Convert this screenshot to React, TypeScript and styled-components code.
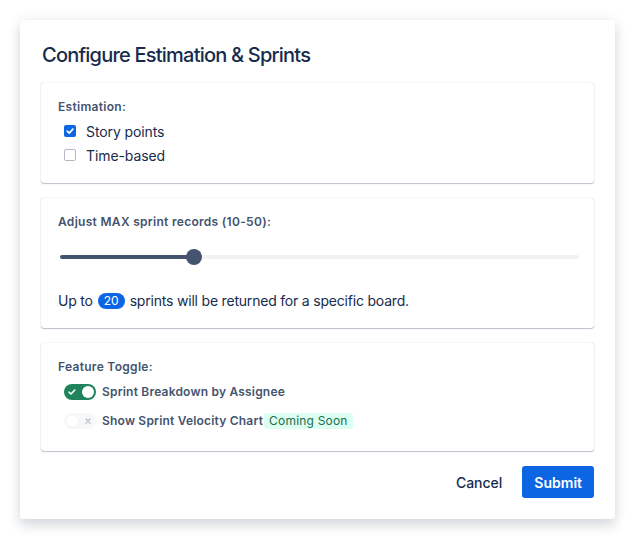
import React from "react";
import styled, { createGlobalStyle } from "styled-components";

const Global = createGlobalStyle`
  html, body { margin: 0; padding: 0; background: #ffffff; }
  body { font-family: Inter, "Noto Sans", Roboto, sans-serif; color: #172B4D; }
  * { box-sizing: border-box; }
`;

const Page = styled.div`
  padding: 20px;
`;

const Modal = styled.div`
  width: 595px;
  background: #fff;
  border-radius: 3px;
  box-shadow: 0 8px 12px rgba(9, 30, 66, 0.12), 0 0 14px rgba(9, 30, 66, 0.08);
  padding: 23px 21px 21px 21px;
  display: flex;
  flex-direction: column;
`;

const Title = styled.h1`
  margin: 0 0 16px 1px;
  font-size: 20px;
  line-height: 24px;
  font-weight: 500;
  color: #172B4D;
  letter-spacing: -0.78px;
`;

const Cards = styled.div`
  display: flex;
  flex-direction: column;
  gap: 15px;
`;

const Card = styled.section<{ $pb?: number }>`
  background: #fff;
  border-radius: 3px;
  box-shadow: 0 1px 1px rgba(9, 30, 66, 0.25), 0 0 1px rgba(9, 30, 66, 0.31);
  padding: 16px 16px ${(p) => p.$pb ?? 16}px 17px;
  display: flex;
  flex-direction: column;
`;

const Label = styled.div`
  font-size: 12px;
  line-height: 16px;
  font-weight: 600;
  color: #44546F;
  letter-spacing: 0.3px;
`;

const CheckRow = styled.label`
  display: flex;
  align-items: center;
  height: 24px;
  padding-left: 6px;
  gap: 10px;
  font-size: 14px;
  color: #172B4D;
  letter-spacing: -0.1px;
`;

const Box = styled.span<{ $checked?: boolean }>`
  width: 12px;
  height: 12px;
  border-radius: 2px;
  display: inline-flex;
  align-items: center;
  justify-content: center;
  background: ${(p) => (p.$checked ? "#0C66E4" : "#fff")};
  border: ${(p) => (p.$checked ? "none" : "1.5px solid #B3B9C4")};
`;

const Checks = styled.div`
  display: flex;
  flex-direction: column;
  margin-top: 4px;
`;

const SliderWrap = styled.div`
  position: relative;
  height: 16px;
  margin: 19px -1px 0 2px;
`;

const Track = styled.div`
  position: absolute;
  left: 0;
  right: 0;
  top: 6px;
  height: 4px;
  border-radius: 2px;
  background: #F1F2F4;
`;

const Fill = styled.div`
  position: absolute;
  left: 0;
  top: 6px;
  height: 4px;
  border-radius: 2px;
  background: #44546F;
`;

const Thumb = styled.div`
  position: absolute;
  top: 0;
  width: 16px;
  height: 16px;
  margin-left: -8px;
  border-radius: 50%;
  background: #44546F;
`;

const Info = styled.p`
  margin: 26px 0 0 0;
  font-size: 14px;
  line-height: 20px;
  color: #172B4D;
  display: flex;
  align-items: center;
  gap: 4px;
  letter-spacing: -0.2px;
`;

const Badge = styled.span`
  display: inline-flex;
  align-items: center;
  justify-content: center;
  background: #0C66E4;
  color: #fff;
  border-radius: 8px;
  height: 16px;
  padding: 0 6px;
  font-size: 12px;
  line-height: 16px;
  margin: 0 1px;
  letter-spacing: 0;
`;

const Toggles = styled.div`
  display: flex;
  flex-direction: column;
  gap: 13px;
  margin-top: 9px;
`;

const ToggleRow = styled.div`
  display: flex;
  align-items: center;
  gap: 6px;
  padding-left: 6px;
  font-size: 12px;
  font-weight: 600;
  color: #44546F;
  line-height: 16px;
  letter-spacing: 0.2px;
`;

const Switch = styled.span<{ $on?: boolean }>`
  position: relative;
  width: 32px;
  height: 16px;
  border-radius: 8px;
  background: ${(p) => (p.$on ? "#1F845A" : "#F7F8F9")};
  display: inline-flex;
  align-items: center;
  justify-content: space-between;
  padding: 0 3px;
  flex-shrink: 0;
`;

const Knob = styled.span<{ $on?: boolean }>`
  position: absolute;
  top: 2px;
  left: ${(p) => (p.$on ? "18px" : "2px")};
  width: 12px;
  height: 12px;
  border-radius: 50%;
  background: #fff;
  box-shadow: ${(p) => (p.$on ? "none" : "0 0 0 0.5px rgba(9,30,66,0.05)")};
`;

const Lozenge = styled.span`
  display: inline-flex;
  align-items: center;
  height: 16px;
  padding: 0 5px;
  border-radius: 3px;
  background: #DCFFF1;
  color: #216E4E;
  font-weight: 400;
  font-size: 12px;
  margin-left: -5px;
  letter-spacing: 0.2px;
`;

const Footer = styled.div`
  display: flex;
  justify-content: flex-end;
  align-items: center;
  gap: 8px;
  margin-top: 15px;
`;

const Button = styled.button<{ $primary?: boolean }>`
  font-family: inherit;
  font-size: 14px;
  font-weight: ${(p) => (p.$primary ? 600 : 500)};
  height: 32px;
  padding: 0 12px;
  border: none;
  border-radius: 3px;
  background: ${(p) => (p.$primary ? "#0C66E4" : "transparent")};
  color: ${(p) => (p.$primary ? "#fff" : "#172B4D")};
  cursor: pointer;
`;

const Check = () => (
  <svg width="10" height="10" viewBox="0 0 10 10">
    <path d="M2.2 5.2 L4.2 7.1 L7.9 3.1" stroke="#fff" strokeWidth="1.7" fill="none" strokeLinecap="round" strokeLinejoin="round" />
  </svg>
);

export default function App() {
  const min = 10, max = 50, value = 20;
  const pct = ((value - min) / (max - min)) * 100;
  return (
    <>
      <Global />
      <Page>
        <Modal>
          <Title>Configure Estimation &amp; Sprints</Title>
          <Cards>
            <Card>
              <Label>Estimation:</Label>
              <Checks>
                <CheckRow>
                  <Box $checked><Check /></Box>
                  Story points
                </CheckRow>
                <CheckRow>
                  <Box />
                  Time-based
                </CheckRow>
              </Checks>
            </Card>
            <Card $pb={17}>
              <Label>Adjust MAX sprint records (10-50):</Label>
              <SliderWrap>
                <Track />
                <Fill style={{ width: `${pct + 0.8}%` }} />
                <Thumb style={{ left: `${pct + 0.8}%` }} />
              </SliderWrap>
              <Info>
                Up to <Badge>20</Badge> sprints will be returned for a specific board.
              </Info>
            </Card>
            <Card $pb={22}>
              <Label>Feature Toggle:</Label>
              <Toggles>
                <ToggleRow>
                  <Switch $on>
                    <svg width="10" height="10" viewBox="0 0 10 10">
                      <path d="M2 5.2 L4 7 L7.8 3" stroke="#fff" strokeWidth="1.6" fill="none" strokeLinecap="round" strokeLinejoin="round" />
                    </svg>
                    <Knob $on />
                  </Switch>
                  Sprint Breakdown by Assignee
                </ToggleRow>
                <ToggleRow>
                  <Switch>
                    <span />
                    <svg width="10" height="10" viewBox="0 0 10 10">
                      <path d="M3 3 L7 7 M7 3 L3 7" stroke="#B3B9C4" strokeWidth="1.3" strokeLinecap="round" />
                    </svg>
                    <Knob />
                  </Switch>
                  Show Sprint Velocity Chart
                  <Lozenge>Coming Soon</Lozenge>
                </ToggleRow>
              </Toggles>
            </Card>
          </Cards>
          <Footer>
            <Button>Cancel</Button>
            <Button $primary>Submit</Button>
          </Footer>
        </Modal>
      </Page>
    </>
  );
}
